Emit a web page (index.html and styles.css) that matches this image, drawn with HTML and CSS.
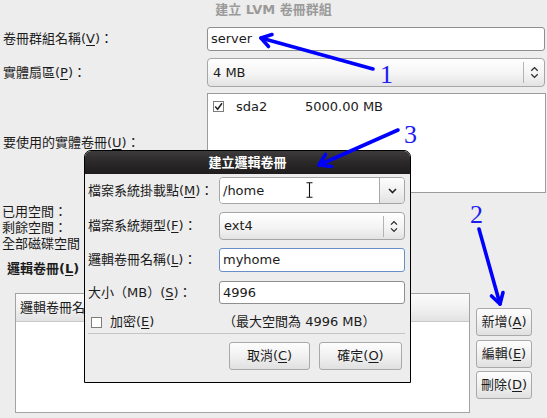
FILE: index.html
```html
<!DOCTYPE html>
<html lang="zh-Hant">
<head>
<meta charset="utf-8">
<title>建立 LVM 卷冊群組</title>
<link rel="stylesheet" href="styles.css">
</head>
<body>
<div class="page">
  <div class="title">建立 LVM 卷冊群組</div>
  <div class="form">
    <div class="row r1">
      <span class="lbl">卷冊群組名稱(<u>V</u>)：</span>
      <div class="entry wide">server</div>
    </div>
    <div class="row r2">
      <span class="lbl">實體扇區(<u>P</u>)：</span>
      <div class="combo wide">
        <span class="combo-text">4 MB</span>
        <span class="combo-btn"><svg width="9" height="13" viewBox="0 0 9 13"><path d="M1.3 4.8 L4.5 1.6 L7.7 4.8 M1.3 8.2 L4.5 11.4 L7.7 8.2" fill="none" stroke="#2a2a2a" stroke-width="1.3"/></svg></span>
      </div>
    </div>
    <div class="row r3">
      <span class="lbl">要使用的實體卷冊(<u>U</u>)：</span>
      <div class="pvlist">
        <div class="pvrow">
          <span class="check"><svg width="9" height="9" viewBox="0 0 9 9"><path d="M1.2 4.6 L3.6 7.2 L8 1.2" fill="none" stroke="#222" stroke-width="1.5"/></svg></span>
          <span class="pvname">sda2</span>
          <span class="pvsize">5000.00 MB</span>
        </div>
      </div>
    </div>
  </div>
  <div class="stats">
    <div>已用空間：</div>
    <div>剩餘空間：</div>
    <div>全部磁碟空間</div>
  </div>
  <div class="lvlabel">邏輯卷冊(<u>L</u>)</div>
  <div class="lvarea">
    <div class="lvlist">
      <div class="lvhead">邏輯卷冊名稱</div>
    </div>
    <div class="lvbtns">
      <button class="btn">新增(<u>A</u>)</button>
      <button class="btn">編輯(<u>E</u>)</button>
      <button class="btn">刪除(<u>D</u>)</button>
    </div>
  </div>
</div>

<div class="dialog">
  <div class="dlg-title">建立邏輯卷冊</div>
  <div class="dlg-body">
    <div class="drow d1">
      <span class="dlbl">檔案系統掛載點(<u>M</u>)：</span>
      <div class="centry">
        <span class="centry-text">/home</span>
        <svg class="ibeam" width="7" height="16" viewBox="0 0 7 16"><path d="M0.5 0.8 H6.5 M3.5 0.8 V15.2 M0.5 15.2 H6.5" fill="none" stroke="#fff" stroke-width="2.6"/><path d="M0.5 0.8 H6.5 M3.5 0.8 V15.2 M0.5 15.2 H6.5" fill="none" stroke="#111" stroke-width="1.1"/></svg>
        <span class="centry-btn"><svg width="9" height="6" viewBox="0 0 9 6"><path d="M1 1 L4.5 4.6 L8 1" fill="none" stroke="#222" stroke-width="1.5"/></svg></span>
      </div>
    </div>
    <div class="drow d2">
      <span class="dlbl">檔案系統類型(<u>F</u>)：</span>
      <div class="combo dfield">
        <span class="combo-text t2">ext4</span>
        <span class="combo-btn b2"><svg width="8" height="13" viewBox="0 0 8 13"><path d="M1 4.6 L4 1.6 L7 4.6 M1 8.4 L4 11.4 L7 8.4" fill="none" stroke="#2a2a2a" stroke-width="1.3"/></svg></span>
      </div>
    </div>
    <div class="drow d3">
      <span class="dlbl">邏輯卷冊名稱(<u>L</u>)：</span>
      <div class="entry dfield focus">myhome</div>
    </div>
    <div class="drow d4">
      <span class="dlbl">大小（MB）(<u>S</u>)：</span>
      <div class="entry dfield">4996</div>
    </div>
    <div class="drow d5">
      <span class="enc"><span class="check small"></span>加密(<u>E</u>)</span>
      <span class="maxinfo">（最大空間為 4996 MB）</span>
    </div>
    <div class="dsep"></div>
    <div class="dbtns">
      <button class="btn dbtn cancel">取消(<u>C</u>)</button>
      <button class="btn dbtn ok">確定(<u>O</u>)</button>
    </div>
  </div>
</div>

<svg class="arrows" width="547" height="418" viewBox="0 0 547 418">
  <g fill="none" stroke="#0000ff" stroke-width="3.6" stroke-linecap="round" stroke-linejoin="round">
    <path d="M373 69 L261 38"/>
    <path d="M272 34.5 L261 38 L268.5 46.5"/>
    <path d="M398 130 L319 165"/>
    <path d="M331.5 166.5 L319 165 L325.5 154.5"/>
    <path d="M479 229 L500 304"/>
    <path d="M491.5 296 L500 304 L503 292.5"/>
  </g>
  <g fill="#1c1cf0" font-family="Liberation Serif, DejaVu Serif, serif" font-size="26">
    <text x="380" y="83">1</text>
    <text x="470" y="223">2</text>
    <text x="404" y="143">3</text>
  </g>
</svg>
</body>
</html>
```

FILE: styles.css
```css
* { box-sizing: border-box; margin: 0; padding: 0; }
html, body { width: 547px; height: 418px; overflow: hidden; }
body {
  position: relative;
  background: #ededed;
  font-family: "DejaVu Sans", "Noto Sans CJK TC", sans-serif;
  font-size: 13px;
  line-height: 16px;
  color: #1b1b1b;
}
u { text-decoration: underline; text-underline-offset: 2px; text-decoration-thickness: 1px; }

.title {
  height: 20px;
  line-height: 20px;
  text-align: center;
  font-weight: bold;
  color: #9a9a9a;
}

.form { display: flex; flex-direction: column; padding-left: 3px; }
.row { display: flex; align-items: center; }
.lbl { width: 204px; flex: none; white-space: nowrap; }
.r1 { margin-top: 7px; height: 24px; }
.r2 { margin-top: 7px; height: 29px; }
.r3 { margin-top: 6px; height: 100px; }

.entry {
  height: 100%;
  background: #fff;
  border: 1px solid #8f8f8f;
  border-radius: 3px;
  padding-left: 3px;
  display: flex;
  align-items: center;
  white-space: nowrap;
}
.wide { width: 338px; }
.entry.focus { border-color: #6a8fc8; }

.combo {
  height: 100%;
  display: flex;
  align-items: center;
  border: 1px solid #a6a6a6;
  border-radius: 4px;
  background: linear-gradient(#ffffff, #f4f4f4 55%, #e3e3e3);
}
.combo-text { flex: 1; padding-left: 5px; }
.combo-btn {
  flex: none;
  width: 21px;
  height: 21px;
  border-left: 1px solid #b4b4b4;
  display: flex;
  align-items: center;
  justify-content: center;
}

.pvlist {
  width: 339px;
  height: 100px;
  background: #fff;
  border: 1px solid #9c9c9c;
}
.pvrow { display: flex; align-items: center; height: 13px; margin-top: 6px; padding-left: 5px; }
.check {
  width: 11px;
  height: 11px;
  flex: none;
  border: 1px solid #7d7d7d;
  background: #fff;
  display: flex;
  align-items: center;
  justify-content: center;
}
.pvname { margin-left: 12px; width: 69px; }
.pvsize { }

.stats { margin-top: 11px; padding-left: 2px; }
.stats div { height: 16px; }

.lvlabel { margin-top: 9px; padding-left: 7px; font-weight: bold; height: 16px; }

.lvarea { margin-top: 16px; display: flex; padding-left: 15px; gap: 6px; }
.lvlist {
  width: 455px;
  height: 120px;
  background: #fff;
  border: 1px solid #a3a3a3;
}
.lvhead {
  height: 28px;
  display: flex;
  align-items: center;
  padding-left: 4px;
  background: linear-gradient(#fbfbfb, #efefef 60%, #e2e2e2);
  border-bottom: 1px solid #c9c9c9;
}
.lvbtns { display: flex; flex-direction: column; gap: 3.5px; margin-top: 15px; }

.btn {
  font: inherit;
  color: #1b1b1b;
  width: 56px;
  height: 28px;
  border: 1px solid #a9a9a9;
  border-radius: 3px;
  background: linear-gradient(#fdfdfd, #f1f1f1 50%, #e0e0e0);
  display: flex;
  align-items: center;
  justify-content: center;
  white-space: nowrap;
}

/* dialog */
.dialog {
  position: absolute;
  left: 84px;
  top: 150px;
  width: 327px;
  height: 233px;
  border: 1px solid #000;
  border-radius: 7px 7px 0 0;
  background: #ededed;
  overflow: hidden;
  z-index: 5;
}
.dlg-title {
  height: 23px;
  line-height: 23px;
  text-align: center;
  font-weight: bold;
  color: #fff;
  background: linear-gradient(#3d3b3b, #2a2828 50%, #1e1c1c);
}
.dlg-body { padding: 0 5px 0 3px; display: flex; flex-direction: column; }
.drow { display: flex; align-items: center; }
.dlbl { width: 131px; flex: none; white-space: nowrap; }
.dfield { width: 186px; }
.d1 { margin-top: 3px; height: 27px; }
.d2 { margin-top: 8px; height: 28px; }
.d3 { margin-top: 8px; height: 24px; }
.d4 { margin-top: 9px; height: 23px; }
.d5 { margin-top: 10px; height: 16px; }

.centry {
  position: relative;
  width: 186px;
  height: 100%;
  display: flex;
  border: 1px solid #a6a6a6;
  border-radius: 4px;
  overflow: hidden;
}
.centry-text {
  flex: 1;
  background: #fff;
  display: flex;
  align-items: center;
  padding-left: 3px;
}
.centry-btn {
  width: 25px;
  flex: none;
  border-left: 1px solid #a9a9a9;
  background: linear-gradient(#fdfdfd, #f0f0f0 55%, #e2e2e2);
  display: flex;
  align-items: center;
  justify-content: center;
}
.ibeam { position: absolute; left: 86px; top: 4px; }
.t2 { padding-left: 4px; }
.b2 { width: 21px; height: 21px; }

.enc { display: flex; align-items: center; width: 135px; padding-left: 3px; }
.check.small { width: 11px; height: 11px; margin-right: 8px; }
.maxinfo { white-space: nowrap; }

.dsep { margin-top: 3px; height: 1px; background: #c4c4c4; }
.dbtns { margin-top: 8px; display: flex; justify-content: flex-end; gap: 9px; padding-right: 3px; }
.dbtn { height: 28px; }
.cancel { width: 81px; }
.ok { width: 83px; }

.arrows { position: absolute; left: 0; top: 0; z-index: 10; pointer-events: none; }
```
